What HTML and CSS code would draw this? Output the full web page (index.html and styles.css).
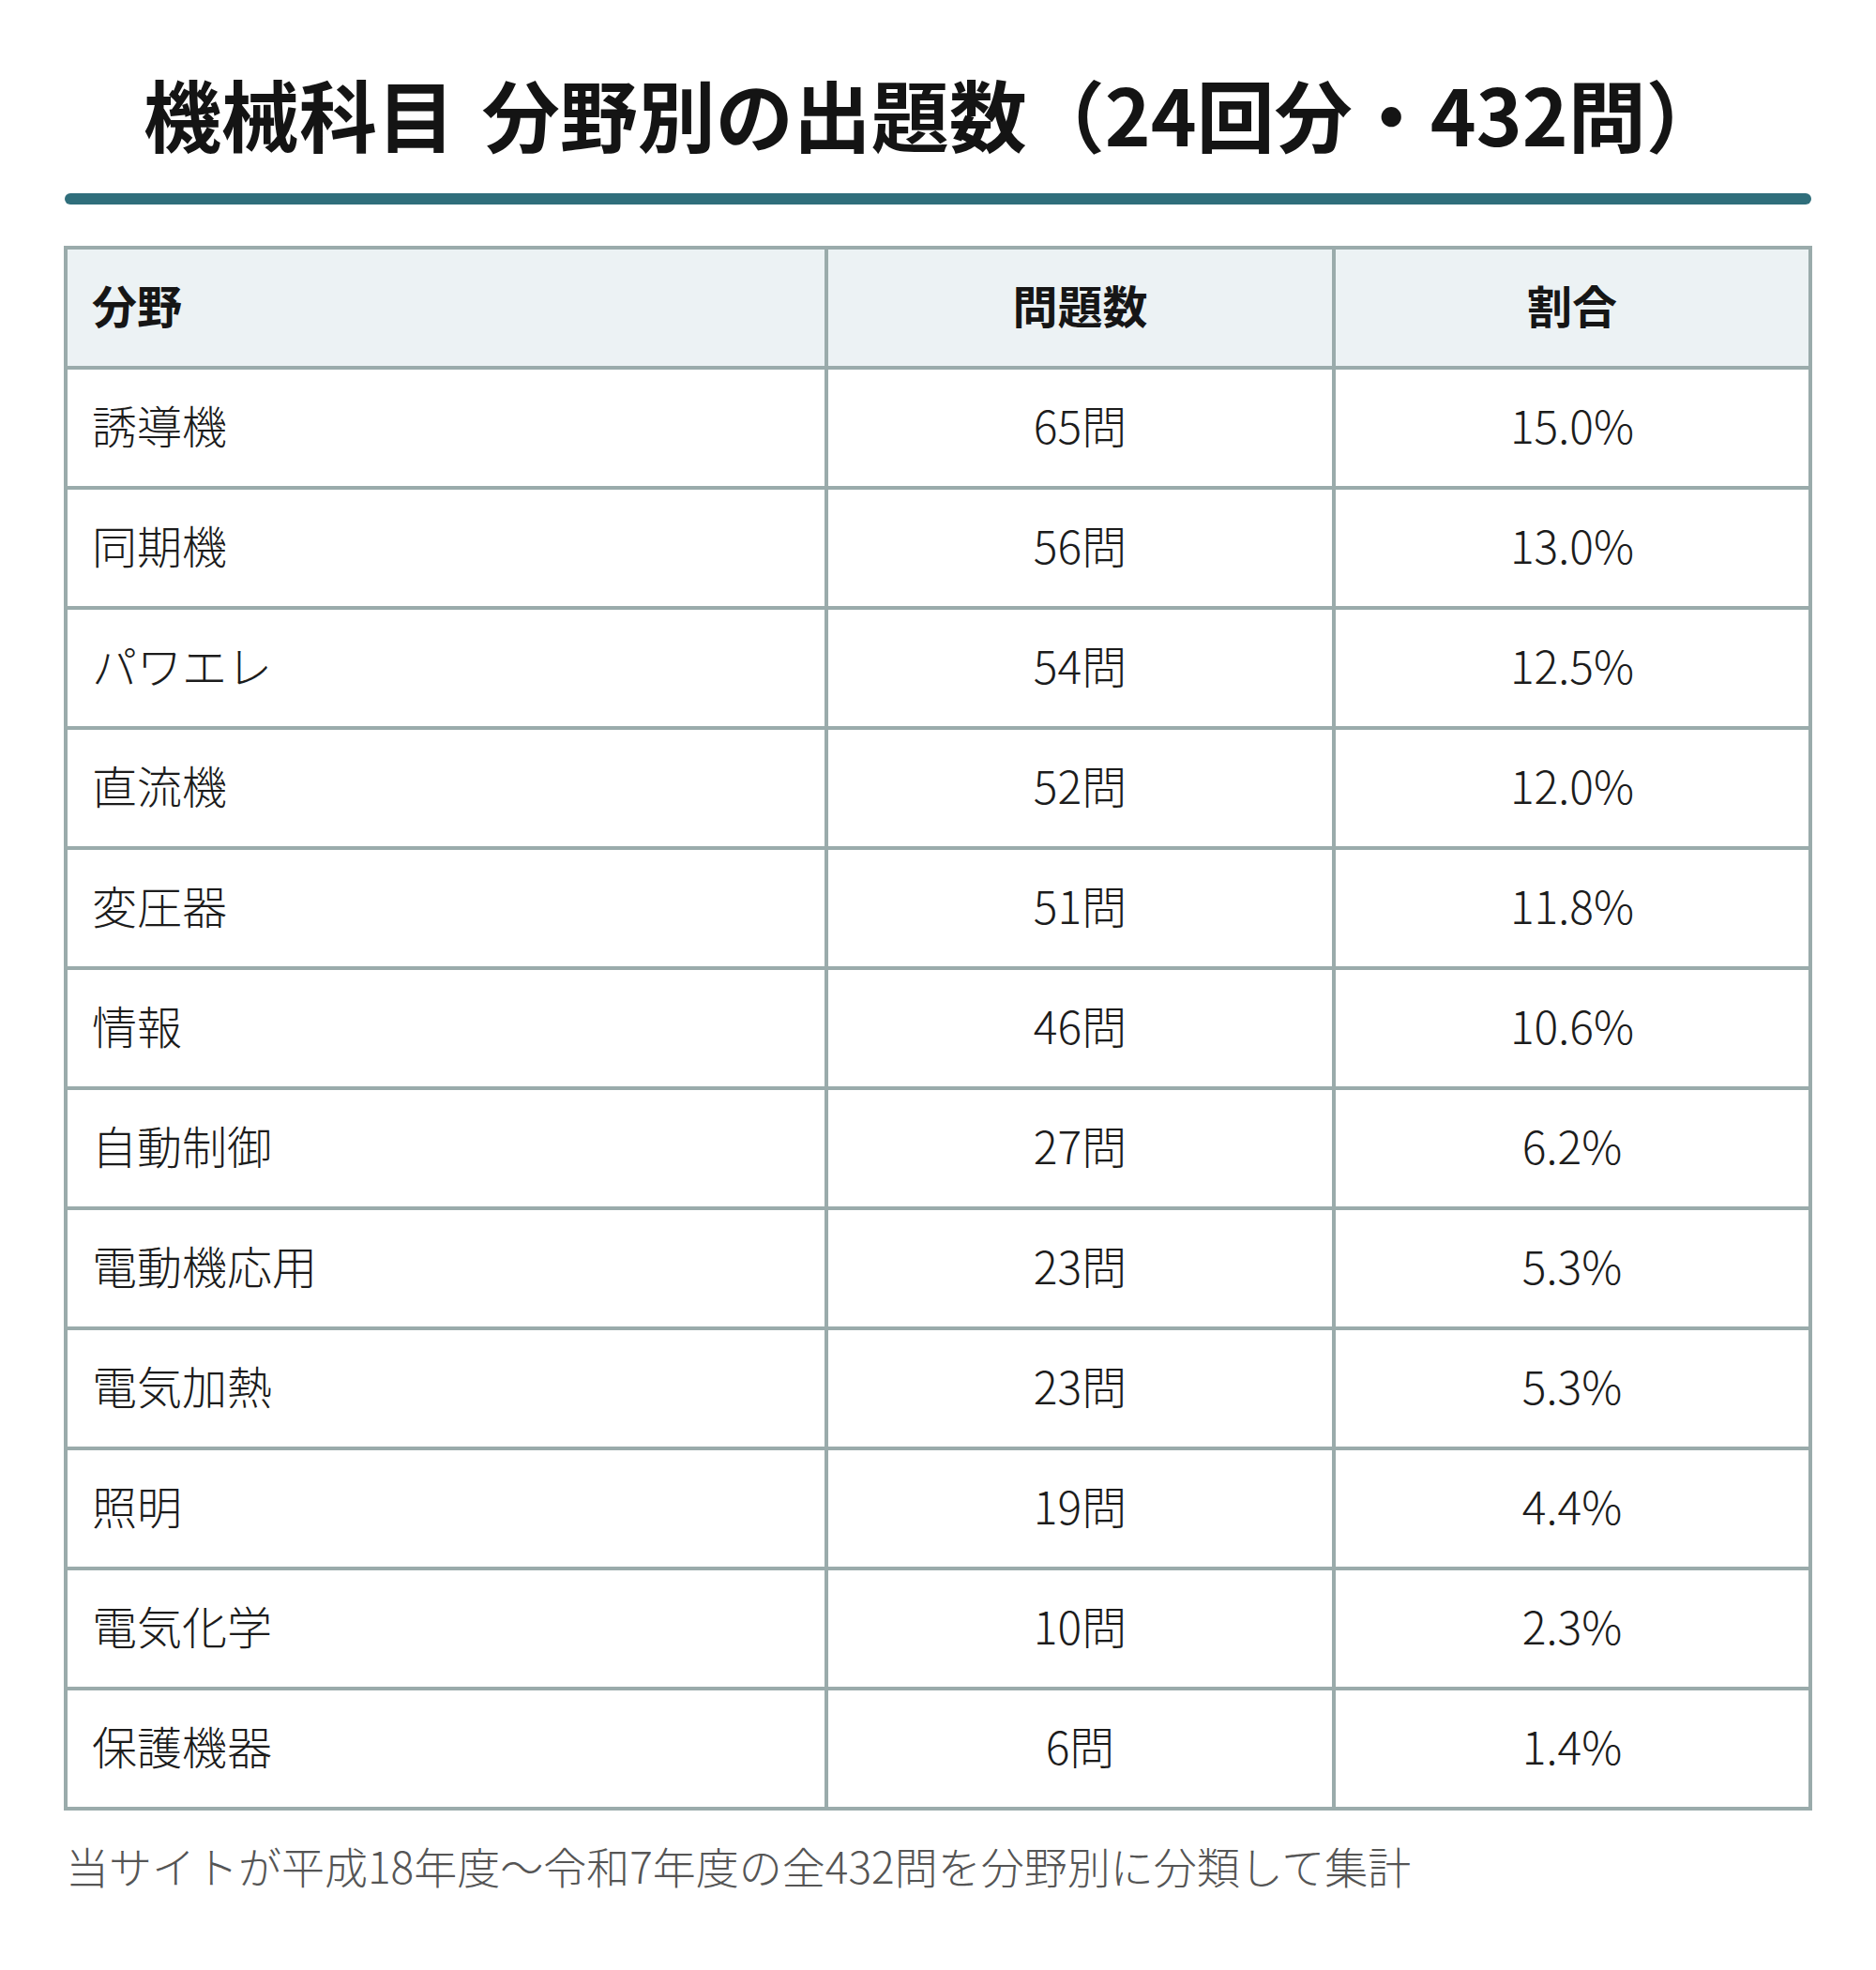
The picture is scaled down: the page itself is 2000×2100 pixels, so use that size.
FILE: index.html
```html
<!DOCTYPE html>
<html lang="ja">
<head>
<meta charset="utf-8">
<title>機械科目 分野別の出題数</title>
<link rel="stylesheet" href="styles.css">
</head>
<body>
<div class="page">
  <h1 class="title">機械科目 分野別の出題数（24回分・432問）</h1>
  <div class="title-rule"></div>
  <table class="stats">
    <colgroup>
      <col class="c-field">
      <col class="c-count">
      <col class="c-rate">
    </colgroup>
    <thead>
      <tr><th class="left">分野</th><th>問題数</th><th>割合</th></tr>
    </thead>
    <tbody>
      <tr><td class="left">誘導機</td><td>65問</td><td>15.0%</td></tr>
      <tr><td class="left">同期機</td><td>56問</td><td>13.0%</td></tr>
      <tr><td class="left">パワエレ</td><td>54問</td><td>12.5%</td></tr>
      <tr><td class="left">直流機</td><td>52問</td><td>12.0%</td></tr>
      <tr><td class="left">変圧器</td><td>51問</td><td>11.8%</td></tr>
      <tr><td class="left">情報</td><td>46問</td><td>10.6%</td></tr>
      <tr><td class="left">自動制御</td><td>27問</td><td>6.2%</td></tr>
      <tr><td class="left">電動機応用</td><td>23問</td><td>5.3%</td></tr>
      <tr><td class="left">電気加熱</td><td>23問</td><td>5.3%</td></tr>
      <tr><td class="left">照明</td><td>19問</td><td>4.4%</td></tr>
      <tr><td class="left">電気化学</td><td>10問</td><td>2.3%</td></tr>
      <tr><td class="left">保護機器</td><td>6問</td><td>1.4%</td></tr>
    </tbody>
  </table>
  <p class="note">当サイトが平成18年度〜令和7年度の全432問を分野別に分類して集計</p>
</div>
</body>
</html>
```

FILE: styles.css
```css
html, body {
  margin: 0;
  padding: 0;
  background: #ffffff;
}

body {
  font-family: "Noto Sans CJK JP", "Noto Sans", sans-serif;
  color: #1a1a1a;
}

.page {
  margin-left: 68px;
  width: 1864px;
}

.title {
  margin: 0;
  padding: 60px 0 0 85px;
  font-size: 83px;
  line-height: 120px;
  font-weight: 700;
  word-spacing: 10px;
  color: #141414;
  white-space: nowrap;
}

.title-rule {
  margin: 26px 1px 0 1px;
  height: 12px;
  border-radius: 6px;
  background: #2f6e7b;
}

.stats {
  margin-top: 44px;
  width: 1864px;
  table-layout: fixed;
  border-collapse: separate;
  border-spacing: 0;
  border-top: 4px solid #9aabab;
  border-left: 4px solid #9aabab;
}

.c-field { width: 811px; }
.c-count { width: 541px; }
.c-rate { width: 508px; }

.stats tr {
  height: 128px;
}

.stats th,
.stats td {
  padding: 0 26px 9px 26px;
  border-right: 4px solid #9aabab;
  border-bottom: 4px solid #9aabab;
  font-size: 48px;
  line-height: 72px;
  text-align: center;
  vertical-align: middle;
  white-space: nowrap;
}

.stats th {
  background: #ecf2f4;
  font-weight: 700;
  color: #161616;
}

.stats td {
  font-weight: 300;
  color: #1c1c1c;
}

.stats .left {
  text-align: left;
}

.note {
  margin: 24px 0 0 2px;
  font-size: 46px;
  line-height: 68px;
  font-weight: 300;
  color: #555555;
}
```
